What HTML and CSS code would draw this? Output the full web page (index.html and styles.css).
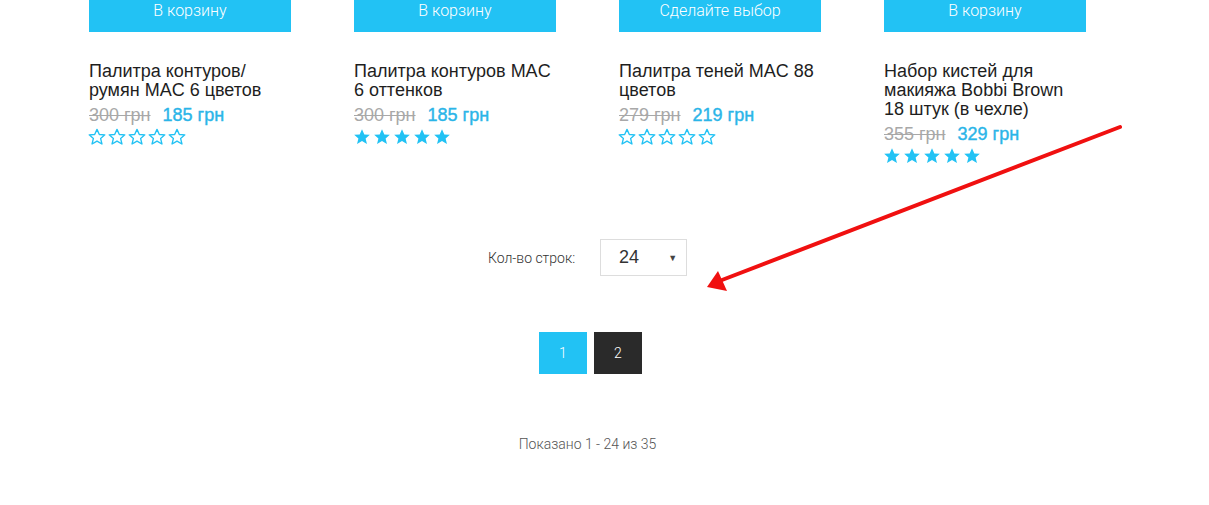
FILE: index.html
```html
<!DOCTYPE html>
<html lang="ru">
<head>
    <meta charset="UTF-8">
    <title>Каталог</title>
    <link rel="stylesheet" href="styles.css">
</head>
<body>
    <div class="catalog">
        <div class="products">
            <div class="product">
                <button class="buy">В корзину</button>
                <h3 class="name">Палитра контуров/ румян MAC 6 цветов</h3>
                <div class="price"><span class="old">300 грн</span><span class="new">185 грн</span></div>
                <div class="stars empty">
                    <svg viewBox="0 0 20 20"><polygon points="10,1.5 12.6,7.2 18.7,7.6 14,11.6 15.5,17.8 10,14.5 4.5,17.8 6,11.6 1.3,7.6 7.4,7.2"/></svg>
                    <svg viewBox="0 0 20 20"><polygon points="10,1.5 12.6,7.2 18.7,7.6 14,11.6 15.5,17.8 10,14.5 4.5,17.8 6,11.6 1.3,7.6 7.4,7.2"/></svg>
                    <svg viewBox="0 0 20 20"><polygon points="10,1.5 12.6,7.2 18.7,7.6 14,11.6 15.5,17.8 10,14.5 4.5,17.8 6,11.6 1.3,7.6 7.4,7.2"/></svg>
                    <svg viewBox="0 0 20 20"><polygon points="10,1.5 12.6,7.2 18.7,7.6 14,11.6 15.5,17.8 10,14.5 4.5,17.8 6,11.6 1.3,7.6 7.4,7.2"/></svg>
                    <svg viewBox="0 0 20 20"><polygon points="10,1.5 12.6,7.2 18.7,7.6 14,11.6 15.5,17.8 10,14.5 4.5,17.8 6,11.6 1.3,7.6 7.4,7.2"/></svg>
                </div>
            </div>
            <div class="product">
                <button class="buy">В корзину</button>
                <h3 class="name">Палитра контуров MAC 6 оттенков</h3>
                <div class="price"><span class="old">300 грн</span><span class="new">185 грн</span></div>
                <div class="stars">
                    <svg viewBox="0 0 20 20"><polygon points="10,1.5 12.6,7.2 18.7,7.6 14,11.6 15.5,17.8 10,14.5 4.5,17.8 6,11.6 1.3,7.6 7.4,7.2"/></svg>
                    <svg viewBox="0 0 20 20"><polygon points="10,1.5 12.6,7.2 18.7,7.6 14,11.6 15.5,17.8 10,14.5 4.5,17.8 6,11.6 1.3,7.6 7.4,7.2"/></svg>
                    <svg viewBox="0 0 20 20"><polygon points="10,1.5 12.6,7.2 18.7,7.6 14,11.6 15.5,17.8 10,14.5 4.5,17.8 6,11.6 1.3,7.6 7.4,7.2"/></svg>
                    <svg viewBox="0 0 20 20"><polygon points="10,1.5 12.6,7.2 18.7,7.6 14,11.6 15.5,17.8 10,14.5 4.5,17.8 6,11.6 1.3,7.6 7.4,7.2"/></svg>
                    <svg viewBox="0 0 20 20"><polygon points="10,1.5 12.6,7.2 18.7,7.6 14,11.6 15.5,17.8 10,14.5 4.5,17.8 6,11.6 1.3,7.6 7.4,7.2"/></svg>
                </div>
            </div>
            <div class="product">
                <button class="buy">Сделайте выбор</button>
                <h3 class="name">Палитра теней MAC 88 цветов</h3>
                <div class="price"><span class="old">279 грн</span><span class="new">219 грн</span></div>
                <div class="stars empty">
                    <svg viewBox="0 0 20 20"><polygon points="10,1.5 12.6,7.2 18.7,7.6 14,11.6 15.5,17.8 10,14.5 4.5,17.8 6,11.6 1.3,7.6 7.4,7.2"/></svg>
                    <svg viewBox="0 0 20 20"><polygon points="10,1.5 12.6,7.2 18.7,7.6 14,11.6 15.5,17.8 10,14.5 4.5,17.8 6,11.6 1.3,7.6 7.4,7.2"/></svg>
                    <svg viewBox="0 0 20 20"><polygon points="10,1.5 12.6,7.2 18.7,7.6 14,11.6 15.5,17.8 10,14.5 4.5,17.8 6,11.6 1.3,7.6 7.4,7.2"/></svg>
                    <svg viewBox="0 0 20 20"><polygon points="10,1.5 12.6,7.2 18.7,7.6 14,11.6 15.5,17.8 10,14.5 4.5,17.8 6,11.6 1.3,7.6 7.4,7.2"/></svg>
                    <svg viewBox="0 0 20 20"><polygon points="10,1.5 12.6,7.2 18.7,7.6 14,11.6 15.5,17.8 10,14.5 4.5,17.8 6,11.6 1.3,7.6 7.4,7.2"/></svg>
                </div>
            </div>
            <div class="product">
                <button class="buy">В корзину</button>
                <h3 class="name">Набор кистей для макияжа Bobbi Brown 18 штук (в чехле)</h3>
                <div class="price"><span class="old">355 грн</span><span class="new">329 грн</span></div>
                <div class="stars">
                    <svg viewBox="0 0 20 20"><polygon points="10,1.5 12.6,7.2 18.7,7.6 14,11.6 15.5,17.8 10,14.5 4.5,17.8 6,11.6 1.3,7.6 7.4,7.2"/></svg>
                    <svg viewBox="0 0 20 20"><polygon points="10,1.5 12.6,7.2 18.7,7.6 14,11.6 15.5,17.8 10,14.5 4.5,17.8 6,11.6 1.3,7.6 7.4,7.2"/></svg>
                    <svg viewBox="0 0 20 20"><polygon points="10,1.5 12.6,7.2 18.7,7.6 14,11.6 15.5,17.8 10,14.5 4.5,17.8 6,11.6 1.3,7.6 7.4,7.2"/></svg>
                    <svg viewBox="0 0 20 20"><polygon points="10,1.5 12.6,7.2 18.7,7.6 14,11.6 15.5,17.8 10,14.5 4.5,17.8 6,11.6 1.3,7.6 7.4,7.2"/></svg>
                    <svg viewBox="0 0 20 20"><polygon points="10,1.5 12.6,7.2 18.7,7.6 14,11.6 15.5,17.8 10,14.5 4.5,17.8 6,11.6 1.3,7.6 7.4,7.2"/></svg>
                </div>
            </div>
        </div>

        <div class="rows-control">
            <span class="rows-label">Кол-во строк:</span>
            <div class="rows-select">
                <span>24</span>
                <span class="caret">&#9660;</span>
            </div>
        </div>

        <div class="pager">
            <a class="page active">1</a>
            <a class="page">2</a>
        </div>

        <div class="summary">Показано 1 - 24 из 35</div>
    </div>

    <!-- стрелка-пометка поверх страницы -->
    <svg class="mark" width="1209" height="505" viewBox="0 0 1209 505">
        <line x1="1120" y1="127" x2="722" y2="280" stroke="#f01010" stroke-width="4" stroke-linecap="round"/>
        <polygon points="707,287 718,271 727,291" fill="#f01010"/>
    </svg>
</body>
</html>
```

FILE: styles.css
```css
body {
    margin: 0;
    padding: 0;
    background-color: #fff;
    font-family: "Liberation Sans", Arial, sans-serif;
    color: #222;
}
.catalog {
    width: 997px;
    margin-left: 89px;
}
.products {
    display: flex;
    gap: 63px;
    margin-top: -11px;
}
.product {
    width: 202px;
}
.buy {
    display: block;
    width: 100%;
    height: 43px;
    border: none;
    background-color: #22c2f4;
    color: #fff;
    font-family: Roboto, sans-serif;
    font-weight: 300;
    font-size: 16px;
    cursor: pointer;
}
.name {
    margin: 30px 0 0;
    width: 200px;
    font-size: 18px;
    font-weight: normal;
    line-height: 19px;
    color: #1e1e1e;
}
.price {
    margin-top: 4px;
    line-height: 22px;
    font-size: 18px;
}
.old {
    color: #a8a8a8;
    text-decoration: line-through;
    margin-right: 12px;
}
.new {
    color: #2bb5e8;
    -webkit-text-stroke: 0.4px #2bb5e8;
}
.stars {
    display: flex;
    gap: 2px;
    margin-top: 2px;
    margin-left: -1px;
}
.stars svg {
    width: 18px;
    height: 18px;
    fill: #22c2f4;
}
.stars.empty svg {
    fill: none;
    stroke: #22c2f4;
    stroke-width: 1.5;
    stroke-linejoin: round;
}
.rows-control {
    display: flex;
    justify-content: center;
    align-items: center;
    gap: 25px;
    margin-top: 74px;
}
.rows-label {
    font-family: Roboto, sans-serif;
    font-weight: 300;
    font-size: 14px;
    color: #333;
}
.rows-select {
    width: 87px;
    height: 37px;
    box-sizing: border-box;
    border: 1px solid #ddd;
    display: flex;
    align-items: center;
    justify-content: space-between;
    padding: 0 9px 0 18px;
    font-size: 18px;
    color: #333;
}
.caret {
    font-size: 9px;
    color: #444;
}
.pager {
    display: flex;
    justify-content: center;
    gap: 7px;
    margin-top: 56px;
    padding-left: 6px;
}
.page {
    width: 48px;
    height: 42px;
    display: flex;
    align-items: center;
    justify-content: center;
    background-color: #2a2a2a;
    color: #fff;
    font-family: Roboto, sans-serif;
    font-weight: 300;
    font-size: 14px;
}
.page.active {
    background-color: #22c2f4;
}
.summary {
    margin-top: 62px;
    text-align: center;
    font-family: Roboto, sans-serif;
    font-weight: 300;
    font-size: 14px;
    color: #555;
}
.mark {
    position: absolute;
    top: 0;
    left: 0;
    pointer-events: none;
}
```
